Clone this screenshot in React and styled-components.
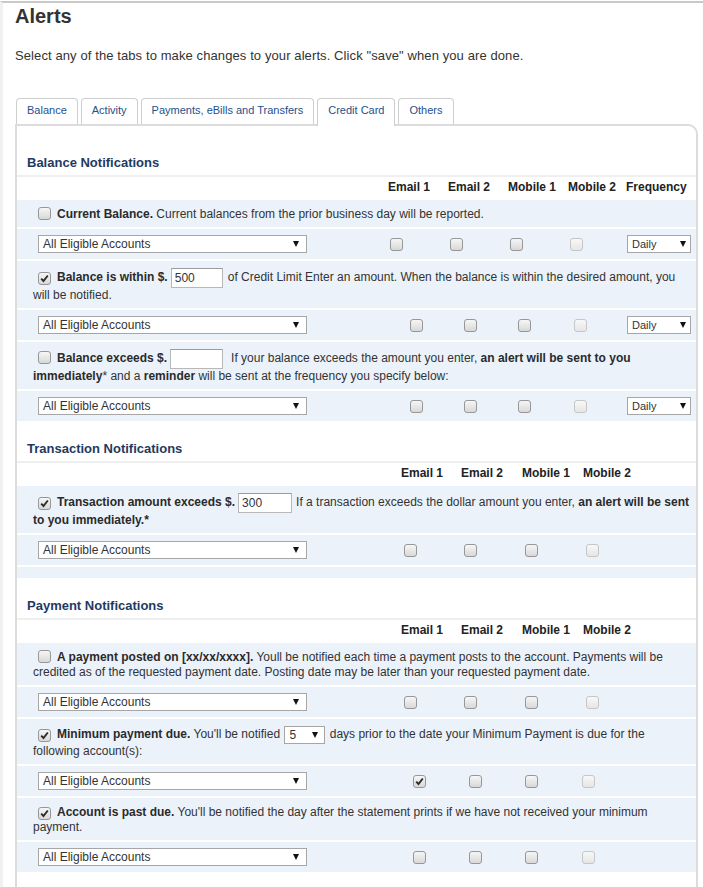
import React from 'react'
import styled, { createGlobalStyle, css } from 'styled-components'

const GlobalStyle = createGlobalStyle`
  html, body {
    margin: 0;
    padding: 0;
    background: #fff;
  }
  body {
    font-family: "Liberation Sans", Arial, sans-serif;
    color: #333;
  }
`

const Page = styled.div`
  margin-top: 1px;
  border-top: 2px solid #c9c9c9;
  border-left: 3px solid #f1f1f1;
  padding: 1px 5px 0 12px;
`

const Title = styled.h1`
  margin: 0;
  font-size: 20px;
  line-height: 24px;
  font-weight: bold;
  color: #333;
`

const Intro = styled.p`
  margin: 20px 0 0;
  font-size: 13px;
  line-height: 16px;
  letter-spacing: 0.1px;
  color: #333;
`

const Tabs = styled.div`
  display: flex;
  align-items: flex-end;
  gap: 3px;
  margin-top: 34px;
  padding-left: 1px;
`

const Tab = styled.div`
  height: 26px;
  box-sizing: border-box;
  padding: 4px 10px 0;
  border: 1px solid #cfcfcf;
  border-bottom: none;
  border-radius: 4px 4px 0 0;
  background: #fff;
  font-size: 11px;
  line-height: 14px;
  color: #24508e;
  ${props => props.$active && css`
    height: 28px;
    margin-bottom: -2px;
    position: relative;
    z-index: 1;
  `}
`

const Panel = styled.div`
  border: 2px solid #dcdcdc;
  border-bottom: none;
  border-radius: 0 10px 0 0;
  padding: 9px 0 24px;
`

const SectionTitle = styled.h2`
  margin: 0;
  padding: 20px 10px 4px;
  font-size: 13px;
  line-height: 16px;
  font-weight: bold;
  color: #1f3a60;
  border-bottom: 2px solid #efefef;
`

const HeaderRow = styled.div`
  display: grid;
  grid-template-columns: ${props => props.$cols};
  padding: 3px 0 5px;
  font-size: 12px;
  line-height: 15px;
  font-weight: bold;
  color: #222;
  white-space: nowrap;
`

const Rows = styled.div`
  display: flex;
  flex-direction: column;
  gap: 2px;
`

const TextRow = styled.div`
  background: #ecf2fa;
  padding: 7px 3px 5px 16px;
  font-size: 12px;
  line-height: 15px;
  color: #333;

  b {
    font-weight: bold;
    color: #2a2a2a;
  }
`

const SelectRow = styled.div`
  display: grid;
  grid-template-columns: ${props => props.$cols};
  align-items: center;
  background: #ecf2fa;
  padding: 6px 0;
`

const Spacer = styled.div`
  background: #ecf2fa;
  height: 11px;
`

const AccountCell = styled.div`
  padding-left: 21px;
  display: flex;
`

const Cell = styled.div`
  display: flex;
  padding-left: ${props => props.$flush ? 0 : 3}px;
`

const SelectBox = styled.span`
  display: inline-flex;
  align-items: center;
  justify-content: space-between;
  width: ${props => props.$w}px;
  height: 18px;
  box-sizing: border-box;
  border: 1px solid #a6a6a6;
  background: #fff;
  padding: 0 ${props => props.$pr || 7}px 0 4px;
  font-size: ${props => props.$fs || 12}px;
  line-height: 16px;
  color: #333;
  vertical-align: middle;
  margin: 0 ${props => props.$mx || 0}px;
`

const Arrow = styled.span`
  width: 0;
  height: 0;
  border-left: 3.5px solid transparent;
  border-right: 3.5px solid transparent;
  border-top: 6px solid #111;
`

const AmountInput = styled.input`
  width: ${props => props.$w}px;
  height: 20px;
  box-sizing: border-box;
  border: 1px solid #b8b8b8;
  border-top-color: #9c9c9c;
  padding: 0 3px;
  margin: 0 ${props => props.$mr || 5}px 0 3px;
  font-family: "Liberation Sans", Arial, sans-serif;
  font-size: 12px;
  color: #333;
  vertical-align: middle;
  outline: none;
`

const Box = styled.span`
  display: inline-flex;
  align-items: center;
  justify-content: center;
  width: 13px;
  height: 13px;
  box-sizing: border-box;
  border: 1px solid ${props => props.$disabled ? '#c6c6c6' : '#979797'};
  border-radius: 3px;
  background: ${props => props.$disabled
    ? 'linear-gradient(#f8f8f8, #e6e6e6)'
    : 'linear-gradient(#f6f6f6, #d8d8d8)'};
  vertical-align: -2px;
  margin: ${props => props.$inline ? '0 6px 0 5px' : '0'};
`

const Check = ({ checked, disabled, inline }) => (
  <Box $disabled={disabled} $inline={inline}>
    {checked && (
      <svg width="9" height="9" viewBox="0 0 9 9">
        <path d="M1.2 4.6 L3.5 7 L7.8 1.5" fill="none" stroke="#2b2b2b" strokeWidth="1.9" />
      </svg>
    )}
  </Box>
)

const BAL_HEAD = '371px 60px 60px 60px 58px 1fr'
const BAL_A = '370px 60px 60px 60px 60px 1fr'
const BAL_B = '390px 54px 54px 56px 56px 1fr'
const TX_HEAD = '384px 60px 61px 61px 1fr'
const PAY_B = '393px 56px 56px 57px 1fr'

const tabs = ['Balance', 'Activity', 'Payments, eBills and Transfers', 'Credit Card', 'Others']

const Header = ({ cols, freq }) => (
  <HeaderRow $cols={cols}>
    <span />
    <span>Email 1</span>
    <span>Email 2</span>
    <span>Mobile 1</span>
    <span>Mobile 2</span>
    {freq && <span>Frequency</span>}
  </HeaderRow>
)

const AccountRow = ({ cols, checked = [], freq }) => (
  <SelectRow $cols={cols}>
    <AccountCell>
      <SelectBox $w={269}>All Eligible Accounts<Arrow /></SelectBox>
    </AccountCell>
    {[0, 1, 2, 3].map(i => (
      <Cell key={i}><Check checked={checked[i]} disabled={i === 3} /></Cell>
    ))}
    {freq && (
      <Cell $flush>
        <SelectBox $w={64} $fs={11} $pr={4}>Daily<Arrow /></SelectBox>
      </Cell>
    )}
  </SelectRow>
)

const App = () => (
  <>
    <GlobalStyle />
    <Page>
      <Title>Alerts</Title>
      <Intro>Select any of the tabs to make changes to your alerts. Click "save" when you are done.</Intro>
      <Tabs>
        {tabs.map(t => <Tab key={t} $active={t === 'Credit Card'}>{t}</Tab>)}
      </Tabs>
      <Panel>
        <SectionTitle>Balance Notifications</SectionTitle>
        <Header cols={BAL_HEAD} freq />
        <Rows>
          <TextRow>
            <Check inline /><b>Current Balance.</b> Current balances from the prior business day will be reported.
          </TextRow>
          <AccountRow cols={BAL_A} freq />
          <TextRow>
            <Check inline checked /><b>Balance is within $.</b><AmountInput $w={52} readOnly value="500" />of Credit Limit Enter an amount. When the balance is within the desired amount, you will be notified.
          </TextRow>
          <AccountRow cols={BAL_B} freq />
          <TextRow>
            <Check inline /><b>Balance exceeds $.</b><AmountInput $w={53} $mr={8} readOnly value="" />If your balance exceeds the amount you enter, <b>an alert will be sent to you immediately</b>* and a <b>reminder</b> will be sent at the frequency you specify below:
          </TextRow>
          <AccountRow cols={BAL_B} freq />
        </Rows>

        <SectionTitle>Transaction Notifications</SectionTitle>
        <Header cols={TX_HEAD} />
        <Rows>
          <TextRow>
            <Check inline checked /><b>Transaction amount exceeds $.</b><AmountInput $w={54} $mr={4} readOnly value="300" />If a transaction exceeds the dollar amount you enter, <b>an alert will be sent to you immediately.*</b>
          </TextRow>
          <AccountRow cols={TX_HEAD} />
          <Spacer />
        </Rows>

        <SectionTitle>Payment Notifications</SectionTitle>
        <Header cols={TX_HEAD} />
        <Rows>
          <TextRow>
            <Check inline /><b>A payment posted on [xx/xx/xxxx].</b> Youll be notified each time a payment posts to the account. Payments will be credited as of the requested payment date. Posting date may be later than your requested payment date.
          </TextRow>
          <AccountRow cols={TX_HEAD} />
          <TextRow>
            <Check inline checked /><b>Minimum payment due.</b> You'll be notified <SelectBox $w={41} $pr={6} $mx={1}>5<Arrow /></SelectBox> days prior to the date your Minimum Payment is due for the following account(s):
          </TextRow>
          <AccountRow cols={PAY_B} checked={[true]} />
          <TextRow>
            <Check inline checked /><b>Account is past due.</b> You'll be notified the day after the statement prints if we have not received your minimum payment.
          </TextRow>
          <AccountRow cols={PAY_B} />
        </Rows>
      </Panel>
    </Page>
  </>
)

export default App
